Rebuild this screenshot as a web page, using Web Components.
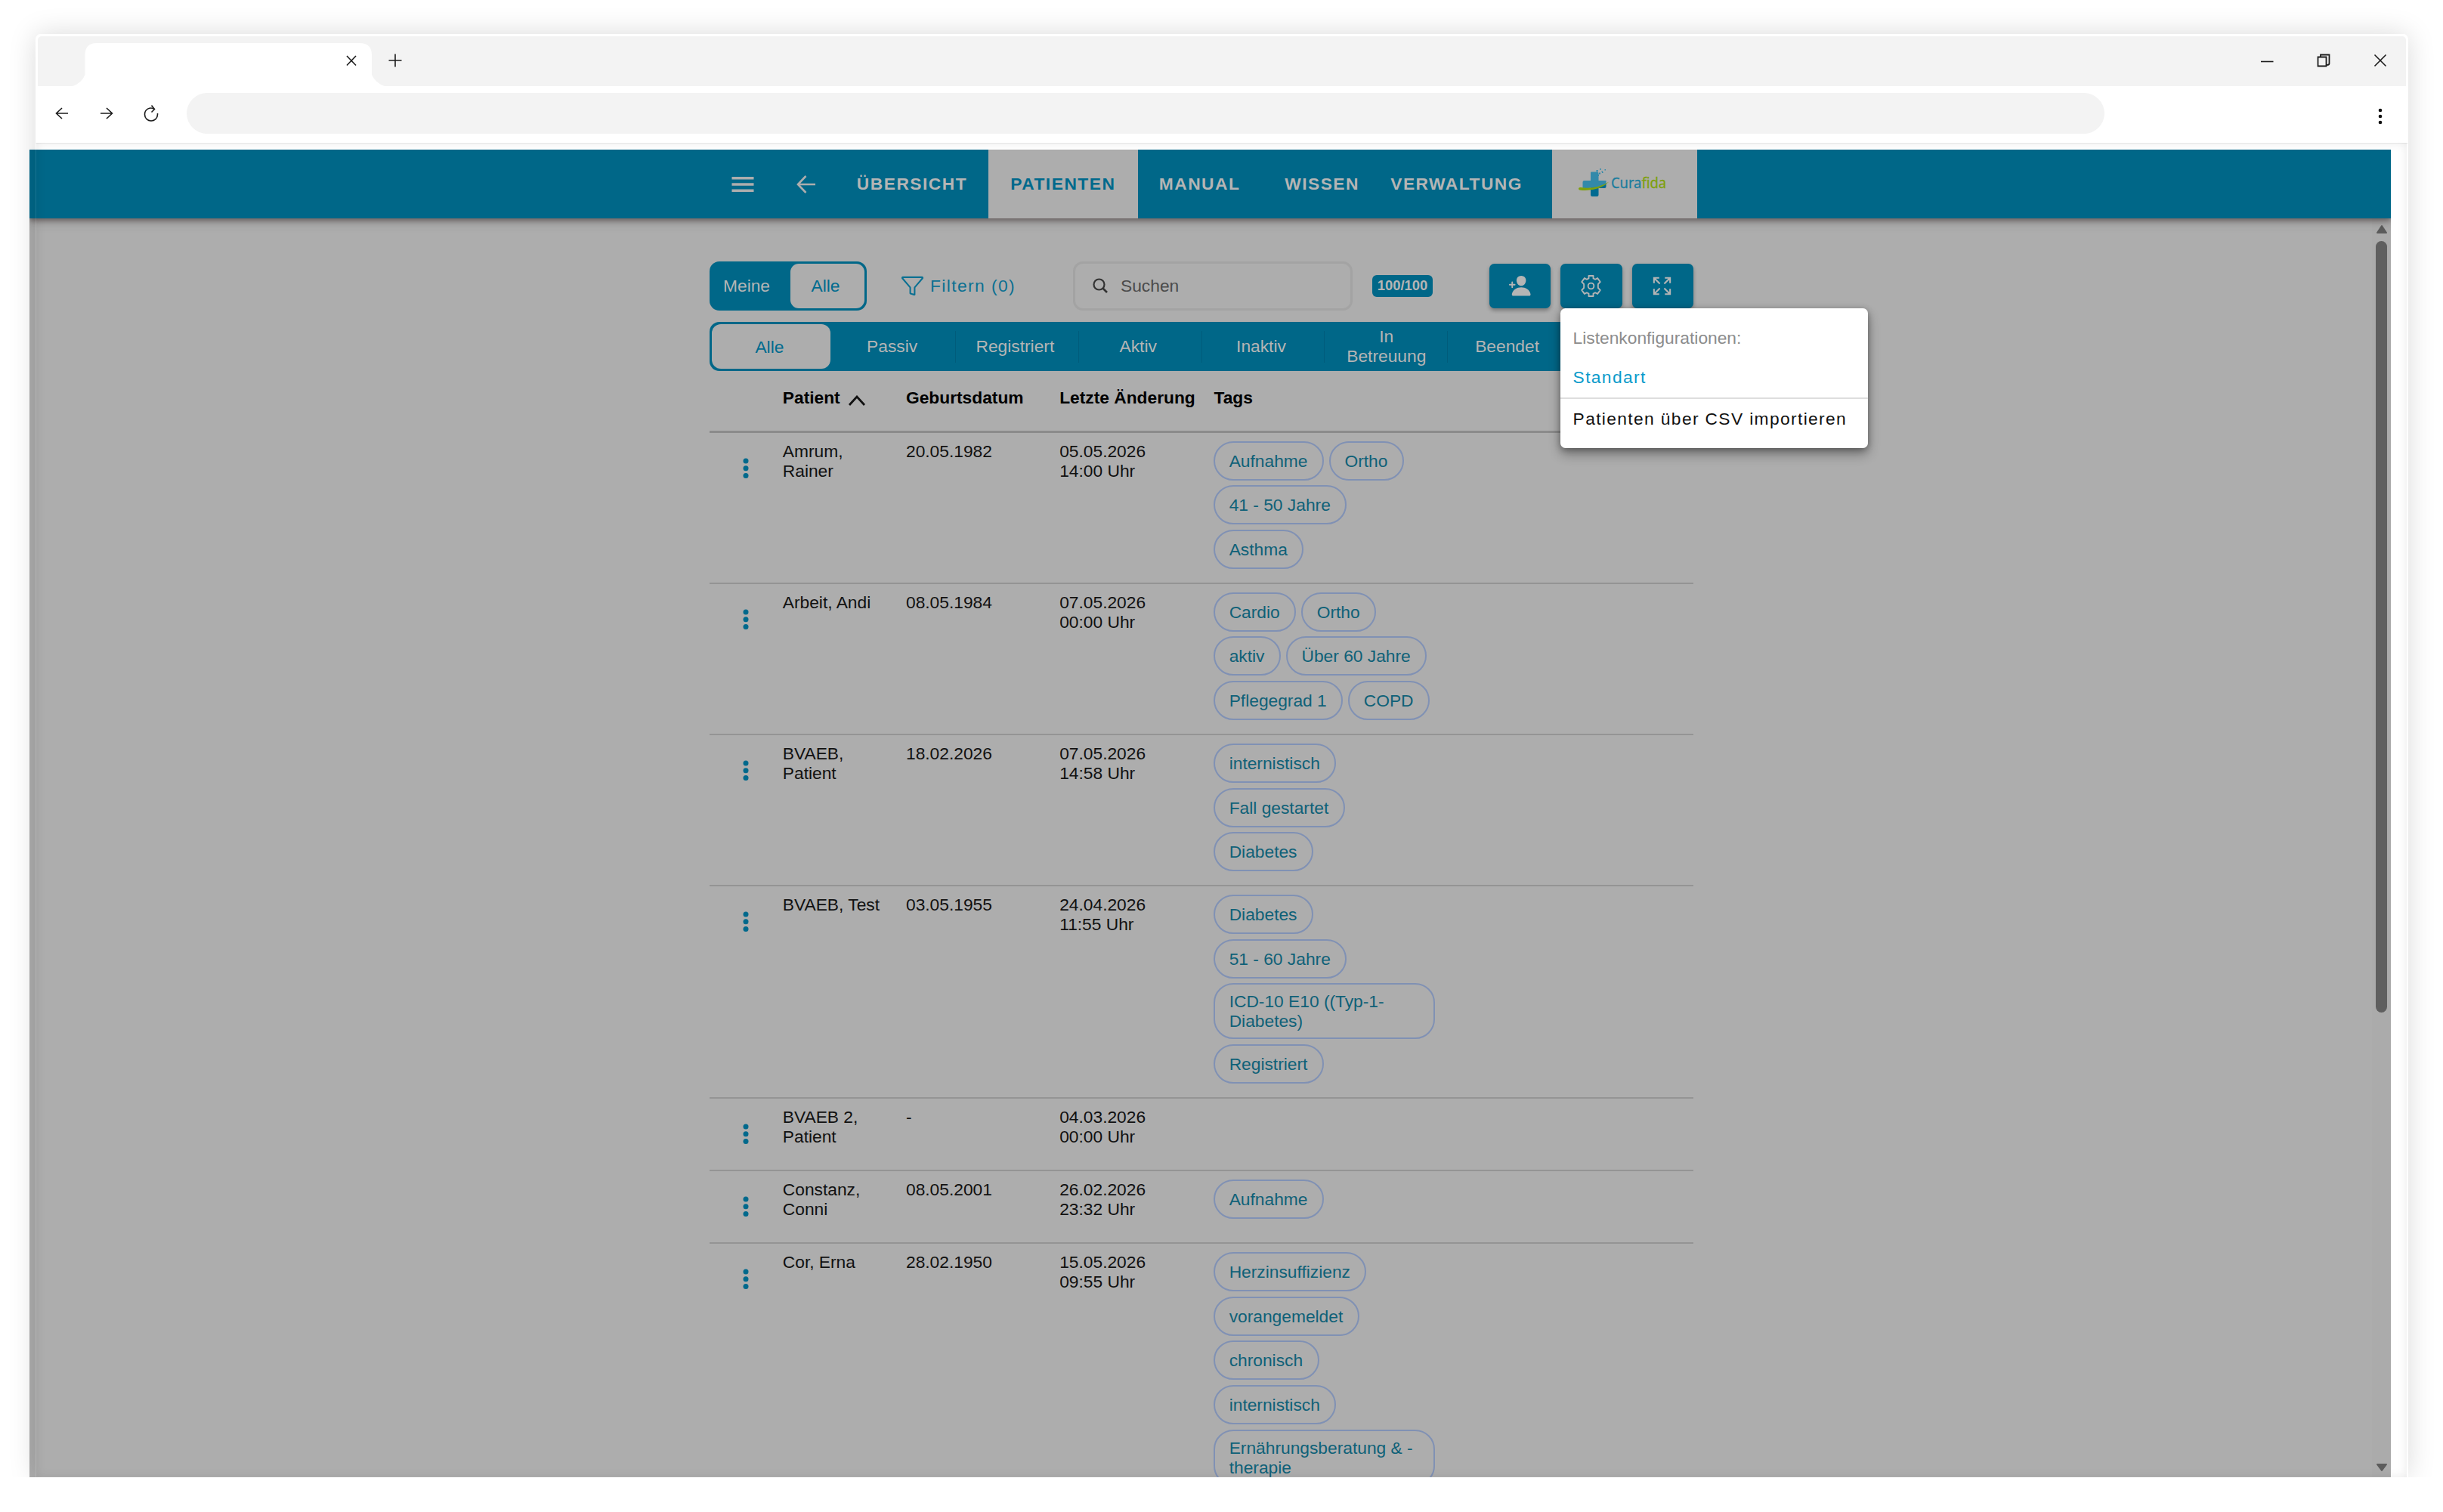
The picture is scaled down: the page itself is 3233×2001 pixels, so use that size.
<!DOCTYPE html>
<html lang="de">
<head>
<meta charset="utf-8">
<title>Patienten</title>
<style>
  body {
    margin: 0;
    background: #fff;
    overflow: hidden;
    font-family: 'Liberation Sans', Arial, sans-serif;
    font-size: 22.78px;
    line-height: 26px;
    color: #111;
    --blue: #006788;
    --gray: #adadad;
  }
</style>
</head>
<body>

<browser-window>
  <app-header>
    <nav-item style="width: 202px">ÜBERSICHT</nav-item>
    <nav-item style="width: 197.6px" active>PATIENTEN</nav-item>
    <nav-item style="width: 164px">MANUAL</nav-item>
    <nav-item style="width: 160px">WISSEN</nav-item>
    <nav-item style="width: 196px">VERWALTUNG</nav-item>
  </app-header>
  <list-toolbar></list-toolbar>
  <status-bar>
    <span>Alle</span><span>Passiv</span><span>Registriert</span><span>Aktiv</span><span>Inaktiv</span><span>In Betreuung</span><span>Beendet</span><span></span>
  </status-bar>
  <patient-table>
    <patient-row name="Amrum, Rainer" born="20.05.1982" changed="05.05.2026 14:00 Uhr">
      <tag-chip>Aufnahme</tag-chip><tag-chip>Ortho</tag-chip><tag-chip>41 - 50 Jahre</tag-chip><tag-chip>Asthma</tag-chip>
    </patient-row>
    <patient-row name="Arbeit, Andi" born="08.05.1984" changed="07.05.2026 00:00 Uhr">
      <tag-chip>Cardio</tag-chip><tag-chip>Ortho</tag-chip><tag-chip>aktiv</tag-chip><tag-chip>Über 60 Jahre</tag-chip><tag-chip>Pflegegrad 1</tag-chip><tag-chip>COPD</tag-chip>
    </patient-row>
    <patient-row name="BVAEB, Patient" born="18.02.2026" changed="07.05.2026 14:58 Uhr">
      <tag-chip>internistisch</tag-chip><tag-chip>Fall gestartet</tag-chip><tag-chip>Diabetes</tag-chip>
    </patient-row>
    <patient-row name="BVAEB, Test" born="03.05.1955" changed="24.04.2026 11:55 Uhr">
      <tag-chip>Diabetes</tag-chip><tag-chip>51 - 60 Jahre</tag-chip><tag-chip>ICD-10 E10 ((Typ-1-Diabetes)</tag-chip><tag-chip>Registriert</tag-chip>
    </patient-row>
    <patient-row name="BVAEB 2, Patient" born="-" changed="04.03.2026 00:00 Uhr"></patient-row>
    <patient-row name="Constanz, Conni" born="08.05.2001" changed="26.02.2026 23:32 Uhr">
      <tag-chip>Aufnahme</tag-chip>
    </patient-row>
    <patient-row name="Cor, Erna" born="28.02.1950" changed="15.05.2026 09:55 Uhr">
      <tag-chip>Herzinsuffizienz</tag-chip><tag-chip>vorangemeldet</tag-chip><tag-chip>chronisch</tag-chip><tag-chip>internistisch</tag-chip><tag-chip>Ernährungsberatung &amp; -therapie</tag-chip>
    </patient-row>
  </patient-table>
  <config-menu slot="overlay"></config-menu>
</browser-window>

<script>
// small helper: registers an element whose shadow root is just cloned from markup
function define(name, html, setup) {
  const template = document.createElement('template');
  template.innerHTML = html;

  window.customElements.define(name, class extends HTMLElement {
    constructor() {
      super();
      this.attachShadow({ mode: 'open' });
      this.shadowRoot.appendChild(template.content.cloneNode(true));
      if (setup) setup(this, this.shadowRoot);
    }
  });
}

define('browser-window', `
  <style>
  :host {
    display: flex;
    flex-direction: column;
    position: relative;
    box-sizing: border-box;
    width: 3140px;
    height: 1910px;
    margin: 45px 0 0 47px;
    background: #fff;
    border-radius: 7px 7px 0 0;
  }
  svg { display: block; fill: none; stroke: #1c1c1c; stroke-width: 1.6; }
  .strip {
    display: flex;
    flex: none;
    height: 66px;
    margin: 3px 3px 0;
    background: #f3f3f3;
    border-radius: 5px 5px 0 0;
  }
  .tab { display: flex; width: 413px; margin: 9px 0 0 46px; }
  .tab svg { flex: none; }
  .cell { display: flex; align-items: center; justify-content: center; width: 75px; }
  .plus { width: 28px; }
  .controls { display: flex; margin: 0 -3px 0 auto; }
  .bar {
    display: flex;
    align-items: center;
    flex: none;
    box-sizing: border-box;
    height: 76px;
    padding: 0 0 3px 5.5px;
    background: #fff;
    border-bottom: 1px solid #efefef;
    border-radius: 10px 10px 0 0;
  }
  .bar .cell { width: 59px; }
  .bar .menu { width: 75px; margin-left: auto; padding-top: 8px; }
  .menu svg { fill: #111; stroke: none; }
  .url { width: 2538px; height: 54px; margin-left: 17px; border-radius: 27px; background: #f3f3f3; }
  .view {
    display: flex;
    width: 3125px;
    height: 1757px;
    margin: 8px 0 0 -8px;
    background: var(--gray);
    overflow: hidden;
  }
  .page { width: 3100px; flex: none; }
  .page ::slotted(app-header) { width: 3125px; }
  .scroll {
    display: flex;
    flex-direction: column;
    align-items: center;
    width: 25px;
    box-sizing: border-box;
    margin-top: 91px;
    padding: 8px 0 6px;
    background: #ababab;
  }
  .scroll svg { fill: #5c5c5c; stroke: #5c5c5c; stroke-width: 2; stroke-linejoin: round; }
  .thumb { width: 15px; height: 1021px; margin: 9px 0 auto; border-radius: 8px; background: #5f5f5f; }
  /* frame glow, painted over the page like a sheet of glass */
  .rim, .glass { position: absolute; inset: 0; pointer-events: none; }
  .rim {
    border: 1px solid #ffffff18;
    border-top-color: #ffffffb0;
    box-sizing: border-box;
    border-radius: 7px 7px 0 0;
    box-shadow: 0 0 36px rgba(0, 0, 0, .15);
  }
  .glass { top: 144px; right: 2px; left: 1px; box-shadow: inset 0 0 13px rgba(0, 0, 0, .09); }
  </style>
  <div class="strip">
    <div class="tab">
      <svg width="413" height="57" viewBox="0 0 413 57">
        <path d="M0 57Q12 53 16.500 42V16Q16.500 0 32 0H380Q396 0 396 16V42Q401 53 413 57Z" fill="#fff" stroke="none"/>
        <path d="M363 17l12 12.500M375 17l-12 12.500"/>
      </svg>
    </div>
    <div class="cell plus"><svg width="18" height="18" style="margin-bottom:3px"><path d="M9 .5v17M.5 9h17"/></svg></div>
    <div class="controls">
      <div class="cell"><svg width="18" height="18"><path d="M1 9.500h16.500"/></svg></div>
      <div class="cell"><svg width="18" height="18" style="margin-bottom:3px"><path d="M1.500 4.500h11v12h-11zM5 4V1.500h11.500V13q0 2-3 2" stroke-width="1.800"/></svg></div>
      <div class="cell"><svg width="18" height="18" style="margin-bottom:3px"><path d="M1.500 1.500l15 15M16.500 1.500l-15 15"/></svg></div>
    </div>
  </div>
  <div class="bar">
    <div class="cell"><svg width="18" height="18"><path d="M17 9H1.500M9 2L1.500 9l7.500 7"/></svg></div>
    <div class="cell"><svg width="18" height="18"><path d="M1 9h15.500M9 2l7.500 7L9 16"/></svg></div>
    <div class="cell"><svg width="20" height="24"><path d="M14.500 6.500C9 3 1.500 6 1.500 13.500c0 5 4 8.500 8.500 8.500s8.500-3.500 8.500-8.500v-1.500M10.500 1.500l4 5-4 4"/></svg></div>
    <div class="url"></div>
    <div class="cell menu"><svg width="6" height="24"><circle cx="3" cy="4" r="2.300"/><circle cx="3" cy="12" r="2.300"/><circle cx="3" cy="20" r="2.300"/></svg></div>
  </div>
  <div class="view">
    <div class="page"><slot></slot></div>
    <div class="scroll">
      <svg width="16" height="13"><path d="M8 2l6 9H2z"/></svg>
      <div class="thumb"></div>
      <svg width="16" height="13"><path d="M2 2h12L8 10z"/></svg>
    </div>
  </div>
  <div class="rim"></div>
  <div class="glass"></div>
  <slot name="overlay"></slot>
`);

define('app-header', `
  <style>
  :host {
    display: flex;
    position: relative;
    box-sizing: border-box;
    height: 91px;
    padding-left: 900px;
    background: var(--blue);
    box-shadow: 0 3px 7px rgba(60, 45, 45, .55), 0 6px 14px rgba(0, 0, 0, .12);
  }
  .icon { display: flex; align-items: center; justify-content: center; width: 88px; }
  .back { width: 79px; }
  .logo { display: flex; justify-content: center; width: 192px; margin-left: 28px; background: var(--gray); }
  svg { display: block; }
  </style>
  <div class="icon">
    <svg width="30" height="22" fill="#adadad"><path d="M.5 1h29v3.500H.5zM.5 9.200h29v3.500H.5zM.5 17.500h29V21H.5z"/></svg>
  </div>
  <div class="icon back">
    <svg width="26" height="24" fill="none" stroke="#adadad" stroke-width="2.600"><path d="M25 12H2M12.500 1L2 12l10.500 11"/></svg>
  </div>
  <slot></slot>
  <div class="logo">
    <svg width="192" height="91" viewBox="0 0 192 91">
      <path d="M51 30.500q0-1 1-1h7.500q2 0 2 2V41h10v5Q55 52 40.500 51v-8q0-2 2-2H51z" fill="#3289aa"/>
      <path d="M51 50.500q12-1 20.500-5V49q0 2-2 2h-8v9q0 2-2 2H53q-2 0-2-2z" fill="#006a91"/>
      <path d="M35 51.500q0-2 3-1.500 20 3 37.500-7.500Q62 55.500 38 53.700q-3 0-3-2.200z" fill="#7ea00c"/>
      <path d="M58.500 27h2.200v2.200h-2.200zM62 30.500h2v2h-2zM63 25h1.800v1.800H63zM65.500 28.500h1.500v1.500h-1.500zM69.500 26h1.500v1.500h-1.500zM66 29.500h1.500V31H66zM60 33h2v2h-2z" fill="#3289aa"/>
      <text x="78" y="51" font-family="Noto Sans, Open Sans, sans-serif" font-size="20.500" textLength="73" lengthAdjust="spacingAndGlyphs" fill="#1b7d9e" stroke="#1b7d9e" stroke-width=".3">Cura<tspan fill="#7ea00c" stroke="#7ea00c">fida</tspan></text>
    </svg>
  </div>
`);

define('nav-item', `
  <style>
  :host {
    display: flex;
    align-items: center;
    justify-content: center;
    flex: none;
    box-sizing: border-box;
    padding-bottom: 1px;
    font-weight: bold;
    letter-spacing: 1.5px;
    color: #b5b5b5;
  }
  :host([active]) { background: var(--gray); color: #00698c; }
  </style>
  <slot></slot>
`);

define('list-toolbar', `
  <style>
  :host {
    display: flex;
    align-items: center;
    width: 1302px;
    height: 65px;
    margin: 57px 0 0 900px;
  }
  svg { display: block; }
  .toggle {
    display: flex;
    align-items: center;
    box-sizing: border-box;
    width: 208px;
    height: 65px;
    padding: 0 3px 0 18px;
    border-radius: 13px;
    background: var(--blue);
    color: #b5b5b5;
  }
  .toggle span { padding-bottom: 1px; }
  .toggle b {
    width: 98px;
    height: 59px;
    margin-left: auto;
    line-height: 58px;
    border-radius: 11px;
    background: var(--gray);
    color: #006b8f;
    font-weight: normal;
    text-align: center;
    text-indent: -5px;
  }
  .filter { display: flex; align-items: center; gap: 8.500px; width: 150px; margin-left: 44.500px; color: #0b7092; letter-spacing: 1.42px; white-space: nowrap; }
  .filter svg { flex: none; }
  .filter span { padding-bottom: 1px; }
  .search {
    display: flex;
    align-items: center;
    gap: 17px;
    box-sizing: border-box;
    width: 370px;
    height: 65px;
    margin-left: 78px;
    padding: 0 0 1px 23.500px;
    border: 3px solid #a3a3a3;
    border-radius: 13px;
    color: #4b4b4b;
  }
  .count {
    width: 80px;
    margin-left: 26.500px;
    border-radius: 6px;
    background: var(--blue);
    color: #b5b5b5;
    font-size: 18.4px;
    font-weight: bold;
    line-height: 27px;
    padding-bottom: 2px;
    text-align: center;
  }
  .buttons { display: flex; gap: 13px; margin-left: auto; }
  .buttons div {
    display: flex;
    align-items: center;
    justify-content: center;
    box-sizing: border-box;
    width: 81.3px;
    height: 59px;
    padding-right: 1px;
    border-radius: 6.5px;
    background: var(--blue);
    box-shadow: 0 3px 5px rgba(0, 0, 0, .3);
  }
  </style>
  <div class="toggle"><span>Meine</span><b>Alle</b></div>
  <div class="filter">
    <svg width="31" height="31" viewBox="0 0 512 512" fill="none" stroke="#0b7092" stroke-width="34" stroke-linejoin="round"><path d="M35.400 87.120l168.650 196.440A16.070 16.070 0 01208 294v119.320a7.930 7.930 0 005.390 7.590l80.150 26.670A7.940 7.940 0 00304 440V294a16.070 16.070 0 014-10.440L476.600 87.120A14 14 0 00466 64H46a14 14 0 00-10.600 23.120z"/></svg>
    <span>Filtern (0)</span>
  </div>
  <div class="search">
    <svg width="20" height="20" fill="none" stroke="#333" stroke-width="2.200"><circle cx="8.500" cy="8.500" r="7"/><path d="M13.500 13.500l5.500 5.500" stroke-width="2.600"/></svg>
    Suchen
  </div>
  <div class="count">100/100</div>
  <div class="buttons">
    <div><svg width="30.500" height="30.500" viewBox="0 0 512 512" fill="#b5b5b5"><path d="M288 256c52.790 0 99.430-49.710 104-110.820 2.270-30.700-7.360-59.330-27.120-80.600C345.330 43.570 318 32 288 32c-30.240 0-57.590 11.500-77 32.380-19.630 21.110-29.200 49.800-27 80.780C188.490 206.280 235.120 256 288 256zM495.380 439.760c-8.440-46.820-34.790-86.150-76.190-113.750C382.420 301.500 335.830 288 288 288s-94.420 13.500-131.190 38c-41.400 27.600-67.750 66.930-76.190 113.750-1.930 10.730.69 21.340 7.190 29.110A30.940 30.940 0 00112 480h352a30.940 30.940 0 0024.210-11.130c6.480-7.770 9.100-18.380 7.170-29.110zM104 288v-40h40a16 16 0 000-32h-40v-40a16 16 0 00-32 0v40H32a16 16 0 000 32h40v40a16 16 0 0032 0z"/></svg></div>
    <div><svg width="31" height="31" viewBox="0 0 512 512" fill="none" stroke="#b5b5b5" stroke-width="31" stroke-linejoin="round"><circle cx="256" cy="256" r="64"/><path d="M206 32h100v58l42 22 50-28 60 82-44 44q-4 10-4 46t4 46l44 44-60 82-50-28-42 22v58H206v-58l-42-22-50 28-60-82 44-44q4-10 4-46t-4-46l-44-44 60-82 50 28 42-22z"/></svg></div>
    <div><svg width="31" height="31" viewBox="0 0 512 512" fill="none" stroke="#b5b5b5" stroke-width="34"><path d="M432 318v114H318M428 428L304 304M80 194V80h114M84 84l124 124M318 80h114v114M428 84L304 208M194 432H80V318M84 428l124-124"/></svg></div>
  </div>
`);

define('status-bar', `
  <style>
  :host {
    display: grid;
    grid-template-columns: repeat(8, 162.8px);
    box-sizing: border-box;
    width: 1302px;
    height: 65.3px;
    margin: 15px 0 0 900.4px;
    border-radius: 13px;
    background: var(--blue);
    color: #b5b5b5;
  }
  ::slotted(span) {
    display: flex;
    align-items: center;
    justify-content: center;
    height: 41px;
    margin: 11.5px 0;
    padding: 0 27px 1px 22px;
    text-align: center;
    border-right: 1.5px solid #005c7b;
  }
  ::slotted(span:nth-child(1)) {
    box-sizing: border-box;
    width: 157px;
    height: 59px;
    margin: 3px;
    padding: 0 5px 0 0;
    border: 0;
    border-radius: 12px;
    background: var(--gray);
    color: #006b8f;
  }
  ::slotted(span:nth-child(6)) { padding: 0 24px 1px 25px; }
  ::slotted(span:last-child) { border: 0; }
  </style>
  <slot></slot>
`);

define('patient-table', `
  <style>
  :host { display: block; width: 1302px; margin-left: 900.4px; }
  .head {
    display: grid;
    grid-template-columns: 96.4px 163.2px 203.2px 204.300px 1fr;
    height: 56.300px;
    padding-top: 22px;
    border-bottom: 3px solid #8b8b8b;
    color: #000;
    font-weight: bold;
    white-space: nowrap;
  }
  svg { margin-left: 10.500px; vertical-align: -2.500px; }
  </style>
  <div class="head">
    <span></span>
    <span>Patient<svg width="24" height="14" fill="none" stroke="#111" stroke-width="2.800"><path d="M2 13L12 2l10 11"/></svg></span>
    <span>Geburtsdatum</span>
    <span>Letzte Änderung</span>
    <span>Tags</span>
  </div>
  <slot></slot>
`);

define('patient-row', `
  <style>
  :host {
    display: grid;
    grid-template-columns: 96.4px 163.2px 203.2px 204px 297px;
    box-sizing: border-box;
    min-height: 96.100px;
    border-bottom: 2px solid #949494;
  }
  svg { display: block; margin: 32px 0 0 43.500px; }
  span { padding: 11px 16px 0 0; }
  .tags {
    display: flex;
    flex-wrap: wrap;
    align-items: flex-start;
    align-content: flex-start;
    gap: 6.6px 7px;
    padding: 11px 0 18px;
  }
  </style>
  <svg width="8" height="30" fill="#00698c"><circle cx="4" cy="5" r="3.500"/><circle cx="4" cy="14.700" r="3.500"/><circle cx="4" cy="24.400" r="3.500"/></svg>
  <span id="name"></span>
  <span id="born"></span>
  <span id="changed" style="padding-right: 40px"></span>
  <div class="tags"><slot></slot></div>
`, (el, root) => {
  for (const key of ['name', 'born', 'changed']) {
    root.querySelector('#' + key).textContent = el.getAttribute(key);
  }
});

define('tag-chip', `
  <style>
  :host {
    display: flex;
    align-items: center;
    box-sizing: border-box;
    max-width: 293px;
    min-height: 52px;
    padding: 9px 19.500px 9px 18.500px;
    border: 2px solid #8091b4;
    border-radius: 26px;
    color: #0f6178;
  }
  </style>
  <slot></slot>
`);

define('config-menu', `
  <style>
  :host {
    display: block;
    position: absolute;
    left: 2018.300px;
    top: 362.700px;
    box-sizing: border-box;
    width: 407px;
    height: 185.600px;
    border-radius: 6.500px;
    background: #fff;
    box-shadow: 0 8px 16px rgba(0, 0, 0, .33), 0 2px 8px rgba(0, 0, 0, .3);
  }
  div { padding-left: 16.300px; white-space: nowrap; }
  .title { padding-top: 26px; color: #8c8c8c; }
  .item { letter-spacing: 1.370px; }
  .current { padding-top: 26px; height: 40px; border-bottom: 2px solid #dedede; color: #0a9bcb; }
  .import { padding-top: 13px; color: #111; }
  </style>
  <div class="title">Listenkonfigurationen:</div>
  <div class="item current">Standart</div>
  <div class="item import">Patienten über CSV importieren</div>
`);
</script>
</body>
</html>
